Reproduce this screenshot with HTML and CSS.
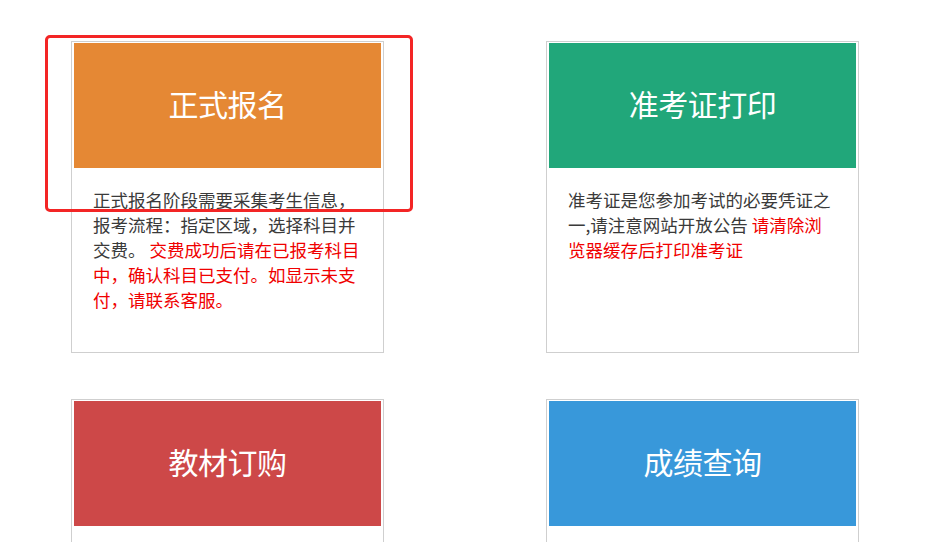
FILE: index.html
```html
<!DOCTYPE html>
<html lang="zh-CN">
<head>
    <meta charset="UTF-8">
    <title>考试服务</title>
    <link rel="stylesheet" href="styles.css">
</head>
<body>
    <div class="grid">
        <div class="card">
            <div class="card-head orange">正式报名</div>
            <p class="card-text">正式报名阶段需要采集考生信息，报考流程：指定区域，选择科目并交费。 <span class="warn">交费成功后请在已报考科目中，确认科目已支付。如显示未支付，请联系客服。</span></p>
        </div>
        <div class="card">
            <div class="card-head green">准考证打印</div>
            <p class="card-text">准考证是您参加考试的必要凭证之一,请注意网站开放公告 <span class="warn">请清除浏览器缓存后打印准考证</span></p>
        </div>
        <div class="card">
            <div class="card-head red">教材订购</div>
            <p class="card-text"></p>
        </div>
        <div class="card">
            <div class="card-head blue">成绩查询</div>
            <p class="card-text"></p>
        </div>
    </div>

    <!-- 标注框 -->
    <div class="mark"></div>
</body>
</html>
```

FILE: styles.css
```css
* {
    margin: 0;
    padding: 0;
    box-sizing: border-box;
}

body {
    font-family: "Noto Sans CJK SC", "Noto Sans", sans-serif;
    background: #fff;
    width: 939px;
    height: 542px;
    overflow: hidden;
    position: relative;
}

.grid {
    display: grid;
    grid-template-columns: 313px 313px;
    column-gap: 162px;
    row-gap: 46px;
    padding: 41px 0 0 71px;
}

.card {
    height: 312px;
    border: 1px solid #cfcfcf;
    padding: 1px 2px 0 2px;
    background: #fff;
}

.card-head {
    height: 125px;
    padding-bottom: 6px;
    display: flex;
    align-items: center;
    justify-content: center;
    color: #fff;
    font-size: 30px;
    letter-spacing: -0.5px;
}

.orange { background: #e58834; }
.green  { background: #21a77a; }
.red    { background: #cd4848; }
.blue   { background: #3898da; }

.card-text {
    padding: 19px 18px 0 19px;
    font-size: 17.5px;
    line-height: 25px;
    color: #3a3a3a;
}

.warn {
    color: #f00000;
}

.mark {
    position: absolute;
    left: 45px;
    top: 35px;
    width: 368px;
    height: 177px;
    border: 3px solid #f32525;
    border-radius: 5px;
}
```
